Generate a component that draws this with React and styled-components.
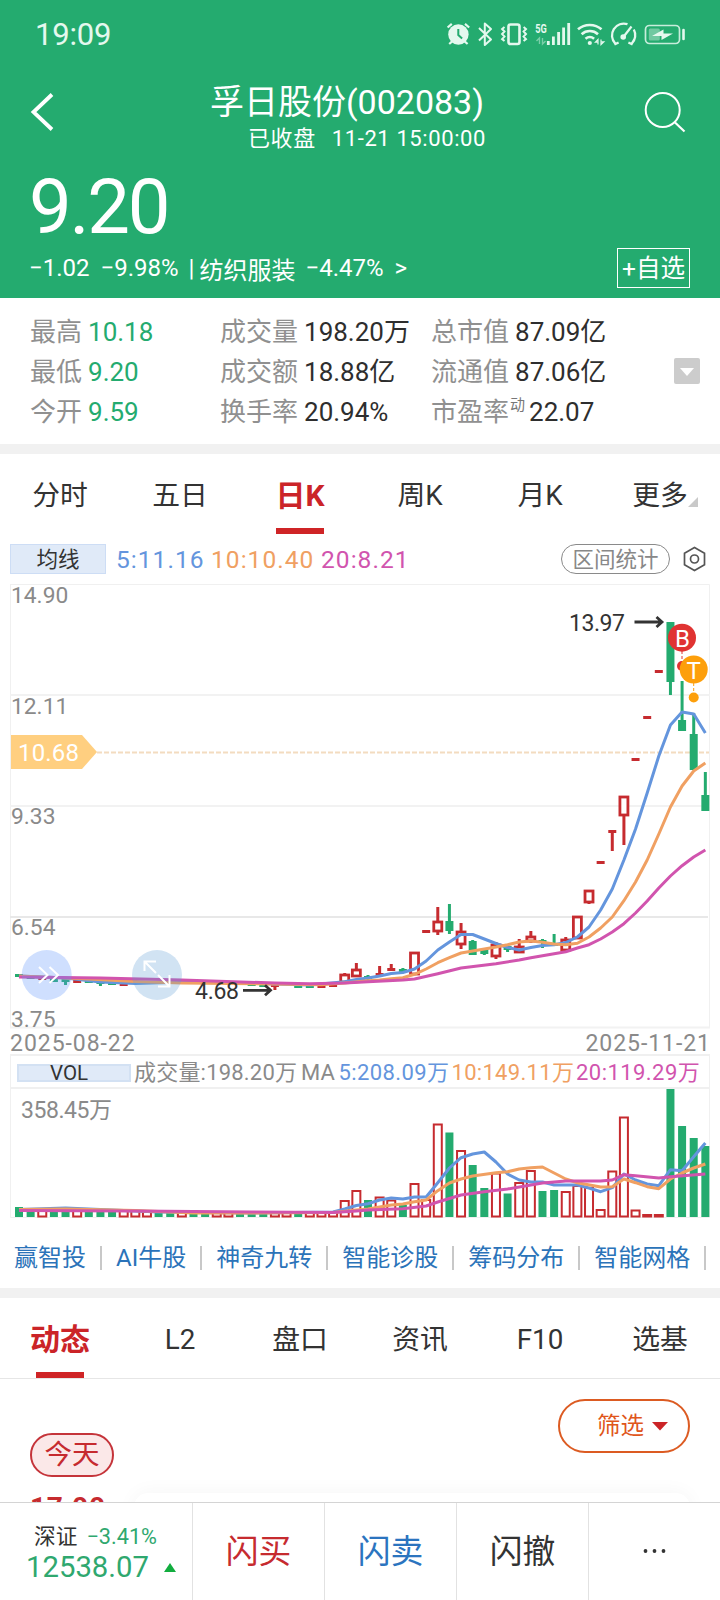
import React from 'react';
import styled, { createGlobalStyle, css } from 'styled-components';

const GREEN = '#24ab6f';
const RED = '#c62b2f';
const BLUE = '#6495dd';
const ORANGE = '#f0a062';
const PINK = '#d154ae';
const FONT = 'Roboto, "Noto Sans CJK SC", sans-serif';

const GlobalStyle = createGlobalStyle`
  * { box-sizing: border-box; }
  body { margin: 0; background: #fff; font-family: ${FONT}; color: #333; }
  svg { display: block; }
  svg text { font-family: ${FONT}; }
`;

const Screen = styled.div`
  width: 720px;
  height: 1600px;
  overflow: hidden;
  display: flex;
  flex-direction: column;
  background: #fff;
  white-space: nowrap;
`;

const Header = styled.header`
  height: 298px;
  flex: none;
  background: ${GREEN};
  color: #fff;
`;

const StatusBar = styled.div`
  height: 68px;
  display: flex;
  align-items: center;
  justify-content: space-between;
  padding: 0 30px 0 35px;
  color: #e4f8ee;
`;

const Clock = styled.span`
  font-size: 31px;
  line-height: 68px;
  padding-top: 1px;
  letter-spacing: -0.2px;
`;

const NavBar = styled.div`
  height: 98px;
  display: flex;
  justify-content: space-between;
  padding: 14px 32px 0 29px;
`;

const NavIcon = styled.div`
  width: 44px;
  padding-top: 6px;
`;

const TitleBlock = styled.div`
  display: flex;
  flex-direction: column;
  align-items: center;
  padding-right: 23px;
`;

const Title = styled.h1`
  margin: 0;
  font-size: 34px;
  font-weight: 400;
  line-height: 40px;
`;

const Subtitle = styled.div`
  font-size: 22px;
  line-height: 30px;
  margin-top: 2px;
  padding-left: 40px;
  letter-spacing: 0.6px;
  display: flex;
  gap: 16px;
`;

const Price = styled.div`
  height: 80px;
  line-height: 83px;
  font-size: 76px;
  letter-spacing: -2.2px;
  padding-left: 29px;
`;

const ChangeRow = styled.div`
  height: 44px;
  display: flex;
  align-items: center;
  justify-content: space-between;
  padding: 0 30px 0 29px;
  font-size: 24px;
`;

const ChangeText = styled.div`
  display: flex;
  align-items: center;
`;

const ChangePart = styled.span`
  margin-right: ${(p) => p.$gap || 0}px;
`;

const AddButton = styled.div`
  width: 73px;
  height: 40px;
  border: 1px solid #fff;
  font-size: 24.6px;
  line-height: 39px;
  text-align: center;
`;

const Stats = styled.section`
  height: 146px;
  flex: none;
  display: grid;
  grid-template-columns: 190px 211px 1fr 26px;
  padding: 14px 20px 0 30px;
`;

const StatColumn = styled.div`
  display: flex;
  flex-direction: column;
`;

const Stat = styled.div`
  height: 40px;
  line-height: 40px;
  font-size: 26px;
  display: flex;
  color: ${(p) => p.$color || '#2e2e2e'};
`;

const StatLabel = styled.span`
  color: #909090;
  margin-right: 6px;
`;

const Super = styled.span`
  color: #777;
  font-size: 15px;
  line-height: 26px;
  margin: 0 4px 0 -5px;
`;

const Expand = styled.div`
  width: 26px;
  height: 26px;
  margin-top: 46px;
  border-radius: 2px;
  background: #ccc;
  padding: 10px 6px;
`;

const Divider = styled.div`
  height: 10px;
  flex: none;
  background: #f1f1f1;
`;

const Tabs = styled.nav`
  height: 80px;
  flex: none;
  display: grid;
  grid-template-columns: repeat(6, 1fr);
  box-shadow: ${(p) => (p.$ruled ? '0 1px 0 #e6e6e6' : 'none')};
`;

const Tab = styled.div`
  position: relative;
  height: 80px;
  display: flex;
  flex-direction: column;
  align-items: center;
  font-size: 27.8px;
  line-height: 83px;
  ${(p) =>
    p.$active &&
    css`
      color: #cb2428;
      font-weight: 700;
      font-size: 30px;
      &::after {
        content: '';
        width: 48px;
        height: 6px;
        margin-top: -9px;
        background: #cf2426;
      }
    `}
`;

const Corner = styled.svg`
  position: absolute;
  left: 88px;
  top: 43px;
`;

const MaRow = styled.div`
  height: 42px;
  flex: none;
  display: flex;
  align-items: center;
  padding: 10px 14px 2px 10px;
`;

const MaBadge = styled.div`
  width: 96px;
  height: 30px;
  border: 1px solid #cdddf5;
  background: #e0eaf8;
  font-size: 21.5px;
  line-height: 30px;
  text-align: center;
  margin-right: 10px;
`;

const MaValue = styled.span`
  color: ${(p) => p.$color};
  font-size: 24.5px;
  line-height: 30px;
  padding-top: 2px;
  letter-spacing: 1.05px;
  width: ${(p) => p.$width}px;
`;

const RangeButton = styled.div`
  margin-left: auto;
  width: 109px;
  height: 30px;
  border: 1px solid #8a8a8a;
  border-radius: 15px;
  color: #888;
  font-size: 21.5px;
  line-height: 30px;
  text-align: center;
  margin-right: 13px;
`;

const Dates = styled.div`
  height: 24px;
  flex: none;
  display: flex;
  justify-content: space-between;
  padding: 0 9px 0 10px;
  color: #8a8a8a;
  font-size: 23px;
  line-height: 28px;
  letter-spacing: 0.95px;
`;

const VolumeHeader = styled.div`
  height: 35px;
  flex: none;
  margin: 0 10px;
  border: solid #f0f0f0;
  border-width: 2px 1px;
  display: flex;
  align-items: center;
  padding-left: 6px;
  padding-top: 2px;
  font-size: 22px;
  line-height: 30px;
  color: #8a8a8a;
`;

const VolBadge = styled.div`
  width: 114px;
  height: 18px;
  border: 2px solid #d3e1f3;
  background: #e0eaf8;
  color: #333;
  font-size: 20.5px;
  line-height: 15px;
  padding-left: 31px;
  margin-right: 3px;
`;

const VolValue = styled.span`
  width: ${(p) => p.$width}px;
  color: ${(p) => p.$color || '#8a8a8a'};
  letter-spacing: ${(p) => p.$track || 0}px;
`;

const Links = styled.div`
  height: 69px;
  flex: none;
  display: flex;
  align-items: center;
  padding: 9px 0 0 14px;
`;

const LinkItem = styled.span`
  color: #2b73b9;
  font-size: 24px;
  line-height: 32px;
  display: flex;
  align-items: center;
  &::after {
    content: '';
    width: 2px;
    height: 24px;
    margin: 0 14px;
    background: #c8c8c8;
  }
`;

const Feed = styled.section`
  height: 124px;
  flex: none;
  display: grid;
  grid-template-columns: 104px 1fr;
  overflow: hidden;
  padding: 21px 30px 0;
`;

const FeedSide = styled.div`
  padding-top: 34px;
`;

const Today = styled.div`
  width: 84px;
  height: 44px;
  border: 2px solid #c5343a;
  border-radius: 22px;
  background: #fbe8e8;
  color: ${RED};
  font-size: 27.5px;
  line-height: 40px;
  text-align: center;
`;

const FeedTime = styled.div`
  color: ${RED};
  font-size: 28px;
  font-weight: 700;
  line-height: 34px;
  margin-top: 14px;
  letter-spacing: 0.7px;
`;

const FeedMain = styled.div`
  display: flex;
  flex-direction: column;
  align-items: flex-end;
`;

const FilterButton = styled.div`
  width: 132px;
  height: 54px;
  border: 2px solid #dc5b22;
  border-radius: 27px;
  color: #e0561b;
  font-size: 23.5px;
  line-height: 50px;
  display: flex;
  align-items: center;
  justify-content: flex-end;
  gap: 8px;
  padding-right: 20px;
`;

const FeedCard = styled.div`
  align-self: stretch;
  margin-top: 40px;
  height: 60px;
  flex: none;
  border-radius: 14px;
  background: #fff;
  box-shadow: 0 0 20px rgba(0, 0, 0, 0.045);
`;

const BottomBar = styled.footer`
  height: 98px;
  flex: none;
  position: relative;
  background: #fff;
  border-top: 1px solid #d4d4d4;
  display: grid;
  grid-template-columns: 192px repeat(4, 1fr);
`;

const IndexCell = styled.div`
  padding: 19px 0 0 26px;
`;

const IndexTop = styled.div`
  display: flex;
  gap: 9px;
  padding-left: 8px;
  font-size: 21.7px;
  line-height: 30px;
  color: ${(p) => p.$color};
`;

const IndexName = styled.span`
  color: #333;
`;

const IndexValue = styled.div`
  display: flex;
  align-items: center;
  gap: 15px;
  color: #2fa86f;
  font-size: 29.3px;
  line-height: 30px;
`;

const Action = styled.div`
  border-left: 1px solid #e2e2e2;
  color: ${(p) => p.$color || '#333'};
  font-size: 32.8px;
  line-height: 99px;
  text-align: center;
  height: 97px;
`;

/* ---------- data ---------- */

const cx = (i) => 19 + i * 11.633;

// [index, up, bodyTop, bodyBottom, high, low]
const candles = [
  [0, 0, 974, 976, 974, 976], [1, 0, 976, 978, 976, 978], [2, 1, 977, 979, 977, 979],
  [3, 0, 979, 981, 978, 981], [4, 0, 979, 982, 978, 985], [5, 1, 980, 982, 980, 982],
  [6, 0, 980, 982, 980, 982], [7, 0, 981, 984, 981, 986], [8, 0, 982, 984, 982, 985],
  [9, 1, 983, 985, 983, 985], [10, 1, 981, 983, 981, 983], [14, 1, 981, 983, 981, 983],
  [20, 0, 983, 985, 983, 986], [21, 0, 984, 986, 984, 986], [22, 1, 984, 986, 984, 990],
  [24, 0, 985, 987, 985, 987], [25, 0, 985, 987, 985, 988], [26, 1, 985, 987, 985, 987],
  [27, 1, 984, 986, 984, 987], [28, 1, 975, 982, 973, 982], [29, 1, 970, 976, 963, 976],
  [30, 0, 976, 979, 975, 980], [31, 1, 973, 975, 966, 975], [32, 1, 968, 970, 964, 971],
  [33, 0, 969, 973, 968, 973], [34, 1, 953, 974, 953, 974], [35, 1, 931, 932, 931, 932],
  [36, 1, 922, 931, 907, 935], [37, 0, 921, 931, 904, 934], [38, 1, 932, 944, 923, 949],
  [39, 0, 941, 955, 940, 955], [40, 0, 949, 954, 949, 955], [41, 1, 945, 956, 942, 959],
  [42, 0, 946, 950, 946, 952], [43, 1, 947, 952, 939, 952], [44, 1, 937, 941, 931, 943],
  [45, 0, 940, 942, 939, 948], [46, 0, 943, 945, 934, 945], [47, 1, 940, 950, 937, 951],
  [48, 1, 917, 938, 916, 939], [49, 1, 891, 902, 890, 904], [50, 1, 862, 863, 862, 863],
  [51, 1, 831, 832, 831, 851], [52, 1, 797, 815, 796, 845], [53, 1, 759, 760, 759, 760],
  [54, 1, 717, 718, 717, 718], [55, 1, 671, 672, 671, 672], [56, 0, 622, 682, 622, 695],
  [57, 0, 720, 731, 681, 731], [58, 0, 734, 770, 713, 770], [59, 0, 795, 811, 772, 811],
];

const ma5 = [[0, 976], [4, 978], [7, 982], [10, 983.5], [14, 982], [18, 982.5], [22, 984], [25, 985], [28, 981.7], [29, 979.5], [30, 978], [31, 976], [32, 973.5], [33, 972.5], [34, 969], [35, 961], [36, 950], [37, 942], [38, 934.5], [39, 934.5], [40, 939], [41, 943.5], [42, 947.5], [43, 950], [44, 947.5], [45, 945.5], [46, 944.7], [47, 942.5], [48, 937], [49, 927], [50, 910], [51, 889], [52, 860], [53, 829], [54, 793], [55, 756], [56, 725], [57, 712], [58, 714], [59, 733]];
const ma10 = [[0, 976], [6, 979], [10, 981.5], [14, 983], [18, 983.5], [22, 984], [26, 984.7], [28, 983], [30, 980.7], [31, 980], [32, 978.7], [33, 977.7], [34, 974.3], [35, 969], [36, 962.7], [37, 957.7], [38, 953], [39, 951], [40, 949], [41, 947], [42, 944.7], [43, 942], [44, 941], [45, 942.3], [46, 944], [47, 944.7], [48, 943.3], [49, 937], [50, 928], [51, 917], [52, 900.7], [53, 882], [54, 860], [55, 834], [56, 807], [57, 786], [58, 771], [59, 763]];
const ma20 = [[0, 977], [7, 978], [14, 980], [22, 983], [25, 983.7], [28, 983], [30, 981.7], [33, 980], [34, 979], [36, 973.7], [38, 968], [41, 963.7], [43, 960], [44, 957.7], [46, 953.7], [47, 951.7], [48, 948], [49, 944.7], [50, 939], [51, 932], [52, 923.7], [53, 913], [54, 901], [55, 888], [56, 876], [57, 865.7], [58, 857], [59, 850]];

const volumes = [
  '0:1207', '0:1208', '1:1210', '0:1209', '0:1209', '1:1210', '0:1209', '0:1210', '0:1210', '1:1211',
  '1:1211', '1:1212', '0:1213', '0:1213', '1:1212', '0:1213', '0:1213', '1:1212', '1:1212', '0:1214',
  '0:1214', '0:1214', '1:1213', '1:1212', '0:1214', '1:1213', '1:1213', '1:1212', '1:1201', '1:1191',
  '0:1200', '1:1197.5', '1:1200.5', '0:1205', '1:1184', '1:1200', '1:1124.5', '0:1132.5', '1:1151', '0:1165',
  '0:1188', '1:1173.5', '0:1193.5', '1:1183', '1:1171', '0:1191', '0:1190', '1:1192', '1:1186', '1:1188',
  '1:1210', '1:1171.5', '1:1117.5', '1:1210.5', '1:1215', '1:1215', '0:1089', '0:1126', '0:1138', '0:1146',
].map((v) => v.split(':').map(Number));

const vma5 = [[0, 1209.5], [4, 1208], [8, 1210], [12, 1212], [20, 1213], [27, 1212], [28, 1209], [29, 1205.5], [30, 1203.7], [31, 1200], [32, 1198], [33, 1199], [34, 1197], [35, 1197], [36, 1182.7], [37, 1168], [38, 1157.7], [39, 1154], [40, 1152], [41, 1162], [42, 1174], [43, 1180], [44, 1182], [45, 1182], [46, 1185], [48, 1185], [49, 1188], [50, 1191.7], [51, 1187.7], [52, 1174], [53, 1180], [54, 1184], [55, 1185.7], [56, 1169.7], [57, 1170.7], [58, 1156.7], [59, 1143]];
const vma10 = [[0, 1209.5], [4, 1209], [10, 1210.5], [15, 1213], [20, 1213], [27, 1212.5], [29, 1210], [30, 1209], [31, 1207], [32, 1205], [33, 1204], [34, 1201.7], [35, 1200], [36, 1190.7], [37, 1183], [38, 1179], [39, 1176], [41, 1172.7], [42, 1171.7], [43, 1169], [44, 1167.7], [45, 1167], [46, 1173], [47, 1179], [48, 1182.7], [50, 1187], [51, 1186.7], [52, 1179], [53, 1182.7], [54, 1186.7], [55, 1188.7], [56, 1179], [57, 1173], [58, 1168], [59, 1164]];
const vma20 = [[0, 1210.5], [10, 1211], [20, 1212], [27, 1212.5], [29, 1211], [30, 1210], [33, 1208.7], [35, 1206], [36, 1202], [38, 1195], [40, 1191.7], [42, 1189], [44, 1185], [45, 1183], [47, 1181], [50, 1181], [51, 1180], [52, 1174.7], [53, 1175.7], [55, 1178], [56, 1176.7], [59, 1174]];

const line = (pts) => pts.map(([i, y]) => `${cx(i)},${y}`).join(' ');

function Line({ points, color }) {
  return <polyline points={line(points)} fill="none" stroke={color} strokeWidth="3" strokeLinejoin="round" />;
}

function Candle({ d: [i, up, top, bottom, high, low] }) {
  const x = cx(i);
  const h = bottom - top;
  const hollow = up && h > 3;
  return (
    <g stroke={up ? RED : GREEN} strokeWidth="3">
      {high < top && <line x1={x} x2={x} y1={high} y2={top} />}
      {low > bottom && <line x1={x} x2={x} y1={bottom} y2={low} />}
      {hollow ? (
        <rect x={x - 4} y={top} width="8" height={h} fill="#fff" strokeWidth="2.8" />
      ) : (
        <rect x={x - 4} y={h < 2 ? top - 1 : top} width="8" height={Math.max(h, 3)} fill={up ? RED : GREEN} stroke="none" />
      )}
    </g>
  );
}

function StatusIcons() {
  const c = '#e4f8ee';
  return (
    <svg width="250" height="36" viewBox="440 16 250 36" fill="none" stroke={c} strokeWidth="2">
      <circle cx="458.4" cy="34.5" r="10.2" fill={c} stroke="none" />
      <path d="M458.3 29v6l3.8 3.4" stroke={GREEN} strokeWidth="2" />
      <path d="M447.6 27.5l4.2-3.6M469.2 27.5L465 23.9M449.2 44l3-2.6M467.6 44l-3-2.6" strokeWidth="2.2" />
      <path d="M479 28l12 11.5-6.2 5.5V23.5l6.2 5.5L479 40.5" strokeWidth="2" strokeLinejoin="round" />
      <rect x="508.5" y="24.5" width="11" height="19.5" rx="2" strokeWidth="2.6" />
      <path d="M504.5 27l-2.4 2 2.4 2.5-2.4 2.6 2.4 2.5-2.4 2.5 2.4 2M523.6 27l2.4 2-2.4 2.5 2.4 2.6-2.4 2.5 2.4 2.5-2.4 2" strokeWidth="2" />
      <text x="535.2" y="32.6" fontSize="12.5" fontWeight="700" fill={c} stroke="none" textLength="11.5" lengthAdjust="spacingAndGlyphs">5G</text>
      <path d="M539.5 44v-6l-3 3M542.5 38v6l3-3" opacity=".45" strokeWidth="1.4" />
      <path d="M548.3 45v-4M553.4 45v-8.6M558.6 45V32M563.6 45V27.6M568.7 45V23" strokeWidth="2.8" />
      <path d="M578 29.3c6.5-5.8 17-5.8 23.5 0M581.6 34.2c4.6-4.2 11.8-4.2 16.4 0M585.5 38.8c2.6-2.2 6-2.2 8.6 0" strokeWidth="2.6" />
      <circle cx="589.8" cy="43" r="2.1" fill={c} stroke="none" />
      <path d="M598 44.5v-5l-2.6 2.7h2.2M601 39.5v5l2.8-2.7h-2.2" strokeWidth="1.2" />
      <path d="M615.2 43.500a11.800 11.800 0 0 1 12.300-19.300M633.800 29.500a11.800 11.800 0 0 1-2 14M612.800 39.500l2.600 4.500 3.200-1.500M634.200 39.500l-2.600 4.500-3.200-1.500" strokeWidth="2.3" />
      <path d="M623 37.500l8.500-11" strokeWidth="2.2" />
      <circle cx="623.2" cy="37" r="2.8" fill={c} stroke="none" />
      <rect x="645.5" y="25.500" width="34" height="18" rx="4" strokeWidth="1.7" opacity=".85" />
      <rect x="648.8" y="28.500" width="11" height="12" rx="1.5" fill={c} stroke="none" opacity=".4" />
      <path d="M652 36l11.500-6.500v4H673l-11.500 6.500v-4z" fill={c} stroke="none" />
      <path d="M683.500 30v9" strokeWidth="2.6" strokeLinecap="round" />
    </svg>
  );
}

function Arrow({ x, y }) {
  return (
    <path d={`M${x} ${y}h27M${x + 22} ${y - 5}l5.5 5-5.5 5`} fill="none" stroke="#333" strokeWidth="2.8" />
  );
}

function PriceChart() {
  const labels = [['14.90', 603], ['12.11', 714], ['9.33', 824], ['6.54', 935], ['3.75', 1027]];
  return (
    <svg width="720" height="454" viewBox="0 576 720 454">
      <path d="M10.5 584.5h699v443M10.5 584v443" fill="none" stroke="#f0f0f0" />
      <path d="M10 695h700M10 806h700M10 1027.5h700" stroke="#f2f2f2" strokeWidth="2" />
      <path d="M10 917h698" stroke="#e8e8e8" strokeWidth="2" />
      {labels.map(([t, y]) => (
        <text key={t} x="11" y={y} fontSize="22.8" fill="#8a8a8a">{t}</text>
      ))}
      <path d="M97 752.5h612" stroke="#f3dcc0" strokeWidth="2" strokeDasharray="5 2" />
      <path d="M11 735h71l15 17-15 17H11z" fill="#ffcf80" />
      <text x="18" y="761" fontSize="24" fill="#fff" textLength="61">10.68</text>
      {candles.map((d) => <Candle key={d[0]} d={d} />)}
      <Line points={ma5} color={BLUE} />
      <Line points={ma10} color={ORANGE} />
      <Line points={ma20} color={PINK} />
      <text x="569" y="631" fontSize="23" fill="#333" textLength="56">13.97</text>
      <Arrow x={634.5} y={622} />
      <text x="195" y="999" fontSize="23" fill="#333" textLength="44">4.68</text>
      <Arrow x={243} y={990.3} />
      <path d="M682 651v13" stroke="#e03332" strokeDasharray="3 2" />
      <circle cx="682" cy="666" r="5" fill="#e03332" />
      <circle cx="682" cy="637.7" r="14" fill="#e03332" />
      <text x="682.5" y="646.500" fontSize="24" fill="#fff" textAnchor="middle">B</text>
      <path d="M693.7 683v12" stroke="#fd9f0b" strokeDasharray="3 2" />
      <circle cx="693.7" cy="697.5" r="5" fill="#fd9f0b" />
      <circle cx="693.7" cy="669.5" r="14" fill="#fd9f0b" />
      <text x="693.7" y="678.500" fontSize="24" fill="#fff" textAnchor="middle">T</text>
      <circle cx="46.7" cy="975" r="25" fill="rgba(96,149,251,.3)" />
      <path d="M39 967l8.5 8-8.5 8M49.5 967l8.5 8-8.5 8" fill="none" stroke="#fff" strokeWidth="2" />
      <circle cx="157" cy="975" r="25" fill="rgba(90,156,212,.28)" />
      <path d="M144.5 971v-9.5h11.5M145 962l11 11M169.5 975v11.5H158M169 986l-11-11" fill="none" stroke="#fff" strokeWidth="2" />
    </svg>
  );
}

function VolumeChart() {
  return (
    <svg width="720" height="130" viewBox="0 1089 720 130">
      <path d="M10.5 1089v128.5h699V1089" fill="none" stroke="#f0f0f0" />
      <text x="21" y="1118" fontSize="23" fill="#8a8a8a" textLength="91">358.45万</text>
      {volumes.map(([up, top], i) =>
        up ? (
          <rect key={i} x={cx(i) - 4} y={top} width="8" height={1216.5 - top} fill="#fff" stroke={RED} strokeWidth="2" />
        ) : (
          <rect key={i} x={cx(i) - 4} y={top} width="8" height={1217 - top} fill={GREEN} />
        )
      )}
      <Line points={vma5} color={BLUE} />
      <Line points={vma10} color={ORANGE} />
      <Line points={vma20} color={PINK} />
    </svg>
  );
}

const stats = [
  [['最高', '10.18', GREEN], ['最低', '9.20', GREEN], ['今开', '9.59', GREEN]],
  [['成交量', '198.20万'], ['成交额', '18.88亿'], ['换手率', '20.94%']],
  [['总市值', '87.09亿'], ['流通值', '87.06亿'], ['市盈率', '22.07', null, '动']],
];

export default function App() {
  return (
    <Screen>
      <GlobalStyle />
      <Header>
        <StatusBar>
          <Clock>19:09</Clock>
          <StatusIcons />
        </StatusBar>
        <NavBar>
          <NavIcon>
            <svg width="26" height="46" viewBox="29 88 26 46" fill="none" stroke="#fff" strokeWidth="3.8">
              <path d="M52 94.5L33.5 112 52 129.5" />
            </svg>
          </NavIcon>
          <TitleBlock>
            <Title>孚日股份(002083)</Title>
            <Subtitle>
              <span>已收盘</span>
              <span>11-21 15:00:00</span>
            </Subtitle>
          </TitleBlock>
          <NavIcon>
            <svg width="44" height="46" viewBox="644 88 44 46" fill="none" stroke="#fff" strokeWidth="2">
              <circle cx="662.7" cy="110" r="17" />
              <path d="M674.5 122l10 9.5" strokeWidth="2.2" />
            </svg>
          </NavIcon>
        </NavBar>
        <Price>9.20</Price>
        <ChangeRow>
          <ChangeText>
            <ChangePart $gap={11}>−1.02</ChangePart>
            <ChangePart $gap={10}>−9.98%</ChangePart>
            <ChangePart $gap={5}>|</ChangePart>
            <ChangePart $gap={10}>纺织服装</ChangePart>
            <ChangePart $gap={11}>−4.47%</ChangePart>
            <ChangePart>&gt;</ChangePart>
          </ChangeText>
          <AddButton>+自选</AddButton>
        </ChangeRow>
      </Header>

      <Stats>
        {stats.map((col, i) => (
          <StatColumn key={i}>
            {col.map(([label, value, color, sup]) => (
              <Stat key={label} $color={color}>
                <StatLabel>{label}</StatLabel>
                {sup && <Super>{sup}</Super>}
                {value}
              </Stat>
            ))}
          </StatColumn>
        ))}
        <Expand>
          <svg width="14" height="8" viewBox="0 0 14 8"><path d="M0 0h14L7 8z" fill="#fff" /></svg>
        </Expand>
      </Stats>

      <Divider />

      <Tabs>
        <Tab>分时</Tab>
        <Tab>五日</Tab>
        <Tab $active>日K</Tab>
        <Tab>周K</Tab>
        <Tab>月K</Tab>
        <Tab>
          更多
          <Corner width="10" height="10" viewBox="0 0 10 10"><path d="M10 0v10H0z" fill="#c9c9c9" /></Corner>
        </Tab>
      </Tabs>

      <MaRow>
        <MaBadge>均线</MaBadge>
        <MaValue $color={BLUE} $width={95}>5:11.16</MaValue>
        <MaValue $color={ORANGE} $width={110}>10:10.40</MaValue>
        <MaValue $color={PINK} $width={100}>20:8.21</MaValue>
        <RangeButton>区间统计</RangeButton>
        <svg width="23" height="26" viewBox="0 0 23 26" fill="none" stroke="#555" strokeWidth="1.7">
          <path d="M11.5 1.5l10 5.7v11.6l-10 5.7-10-5.7V7.2z" />
          <circle cx="11.5" cy="13" r="4" />
        </svg>
      </MaRow>

      <PriceChart />

      <Dates>
        <span>2025-08-22</span>
        <span>2025-11-21</span>
      </Dates>

      <VolumeHeader>
        <VolBadge>VOL</VolBadge>
        <VolValue $width={167} $track={0.2}>成交量:198.20万</VolValue>
        <VolValue $width={37.5}>MA</VolValue>
        <VolValue $width={113} $track={0.4} $color={BLUE}>5:208.09万</VolValue>
        <VolValue $width={124.5} $track={0.3} $color={ORANGE}>10:149.11万</VolValue>
        <VolValue $width={120} $track={0.45} $color={PINK}>20:119.29万</VolValue>
      </VolumeHeader>
      <VolumeChart />

      <Links>
        {['赢智投', 'AI牛股', '神奇九转', '智能诊股', '筹码分布', '智能网格'].map((t) => (
          <LinkItem key={t}>{t}</LinkItem>
        ))}
      </Links>

      <Divider />

      <Tabs $ruled>
        <Tab $active>动态</Tab>
        <Tab>L2</Tab>
        <Tab>盘口</Tab>
        <Tab>资讯</Tab>
        <Tab>F10</Tab>
        <Tab>选基</Tab>
      </Tabs>

      <Feed>
        <FeedSide>
          <Today>今天</Today>
          <FeedTime>17:00</FeedTime>
        </FeedSide>
        <FeedMain>
          <FilterButton>
            筛选
            <svg width="16" height="9" viewBox="0 0 16 9"><path d="M0 0h16L8 8.5z" fill="#cb2428" /></svg>
          </FilterButton>
          <FeedCard />
        </FeedMain>
      </Feed>

      <BottomBar>
        <IndexCell>
          <IndexTop $color="#2fa86f">
            <IndexName>深证</IndexName>
            <span>−3.41%</span>
          </IndexTop>
          <IndexValue>
            12538.07
            <svg width="12" height="9" viewBox="0 0 12 9"><path d="M6 0l6 9H0z" fill="#12ad3f" /></svg>
          </IndexValue>
        </IndexCell>
        <Action $color={RED}>闪买</Action>
        <Action $color="#2b74bf">闪卖</Action>
        <Action>闪撤</Action>
        <Action>
          <svg width="131" height="97" viewBox="0 0 131 97" fill="#333">
            <circle cx="56.5" cy="48" r="1.9" />
            <circle cx="65.5" cy="48" r="1.9" />
            <circle cx="74.5" cy="48" r="1.9" />
          </svg>
        </Action>
      </BottomBar>
    </Screen>
  );
}
